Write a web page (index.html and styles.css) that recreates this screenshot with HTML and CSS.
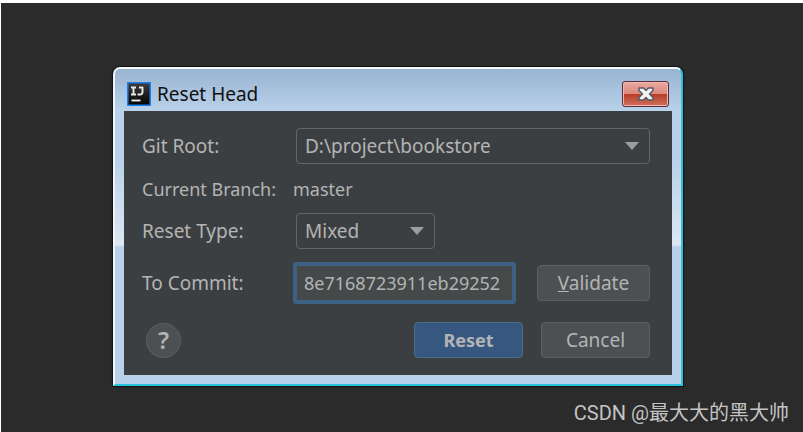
FILE: index.html
```html
<!DOCTYPE html>
<html lang="en">
<head>
  <meta charset="UTF-8">
  <meta name="viewport" content="width=device-width, initial-scale=1.0">
  <title>Reset Head</title>
  <link rel="stylesheet" href="styles.css">
</head>
<body>
  <main class="desktop">
    <form class="dialog" aria-labelledby="dialog-title">
      <div class="title-bar">
        <svg class="app-icon" width="24" height="24" viewBox="0 0 24 24" aria-hidden="true">
          <defs>
            <linearGradient id="icon-fill" x1="0" y1="0" x2="0" y2="1">
              <stop offset="0" stop-color="#3a3b3d"/>
              <stop offset="1" stop-color="#050505"/>
            </linearGradient>
          </defs>
          <rect width="24" height="24" fill="#1a7df0"/>
          <rect x="1.500" y="1.500" width="21" height="21" fill="url(#icon-fill)"/>
          <path d="M4 5.500h5M6.500 5.500v7M4 12.500h5M12 5.500h4M15.500 5v5q0 2.500-2.500 2.500h-2.500" fill="none" stroke="#e8e8e8" stroke-width="1.900"/>
          <path d="M4.500 18.500h9" stroke="#f2f2f2" stroke-width="1.800"/>
        </svg>
        <h1 id="dialog-title">Reset Head</h1>
        <button type="button" class="close-button" aria-label="Close">
          <svg width="18" height="14" viewBox="0 0 18 14" aria-hidden="true">
            <path d="M2 1h4.500l2.500 2.500L11.500 1H16v2.500L12.500 7l3.500 3.500V13h-4.500L9 10.500 6.500 13H2v-2.500L5.500 7 2 3.500z" fill="#f2f2f2" stroke="#565b6b" stroke-width="1.500" stroke-linejoin="round"/>
          </svg>
        </button>
      </div>

      <div class="content">
        <div class="row">
          <label for="git-root">Git Root:</label>
          <div class="select-box">
            <select id="git-root">
              <option>D:\project\bookstore</option>
            </select>
          </div>
        </div>

        <div class="row info-row">
          <span>Current Branch:</span>
          <span>master</span>
        </div>

        <div class="row">
          <label for="reset-type">Reset Type:</label>
          <div class="select-box short">
            <select id="reset-type">
              <option>Mixed</option>
              <option>Soft</option>
              <option>Hard</option>
            </select>
          </div>
        </div>

        <div class="row commit-row">
          <label for="commit">To Commit:</label>
          <input type="text" id="commit" value="8e7168723911eb29252">
          <button type="button" class="button validate"><u>V</u>alidate</button>
        </div>

        <div class="actions">
          <button type="button" class="help-button" aria-label="Help">?</button>
          <button type="submit" class="button primary">Reset</button>
          <button type="button" class="button">Cancel</button>
        </div>
      </div>
    </form>
    <p class="watermark">CSDN @最大大的黑大帅</p>
  </main>
</body>
</html>
```
FILE: styles.css
```css
* {
  box-sizing: border-box;
}
body {
  margin: 0;
  background: #fff;
  color: #b4b4b4;
  font: 19px/24px "Noto Sans", "Noto Sans CJK SC", sans-serif;
}
button, input, select {
  color: inherit;
  font: inherit;
}
.desktop {
  position: relative;
  min-height: calc(100vh - 3px);
  margin: 3px 0 0 1px;
  padding: 64px 120px 44px 112px;
  background: #2b2b2b;
}

/* window frame */
.dialog {
  padding: 0 9px 9px;
  border: 2px solid #29c4dc;
  border-top-color: #f4f8fb;
  border-left-color: #eef4fa;
  border-radius: 7px 7px 0 0;
  background: linear-gradient(#99b4d1, #b9d1ea 42px, #b9d1ea 90px, #dce7f3 176px, #b9d1ea 178px);
  box-shadow: 0 0 1px 1px #111;
}
.title-bar {
  display: flex;
  align-items: center;
  height: 42px;
  padding: 7px 3px 0;
  color: #111;
}
.title-bar h1 {
  flex: 1;
  margin: 0 0 0 6px;
  font-size: 19px;
  font-weight: 400;
}
.close-button {
  display: flex;
  align-items: center;
  justify-content: center;
  width: 47px;
  height: 26px;
  padding: 0;
  border: 1px solid #592b3d;
  border-radius: 3px;
  background: linear-gradient(#e9aaa0, #dc8a7d 48%, #b73c25 50%, #d0705c);
  box-shadow: inset 0 0 0 1px #eebbb2;
}

/* form */
.content {
  padding: 17px 22px 17px 18px;
  background: #3c3f41;
}
.row {
  display: grid;
  grid-template-columns: 151px 1fr;
  align-items: center;
  min-height: 36px;
  margin-bottom: 7px;
}
.info-row {
  min-height: 35px;
  font-size: 18px;
}
.select-box {
  position: relative;
  margin-left: 3px;
}
.select-box.short {
  width: 139px;
}
.select-box select {
  display: block;
  width: 100%;
  height: 36px;
  padding: 0 36px 0 8px;
  border: 1px solid #646566;
  border-radius: 4px;
  background: #3c3f41;
  appearance: none;
}
.select-box::after {
  content: "";
  position: absolute;
  top: 14px;
  right: 11px;
  width: 14px;
  height: 8px;
  background: #9b9ea0;
  clip-path: polygon(0 0, 100% 0, 50% 100%);
  pointer-events: none;
}
.commit-row {
  grid-template-columns: 151px 1fr 113px;
  margin: 13px 0 18px;
}
.commit-row input {
  width: 223px;
  height: 42px;
  padding: 0 7px;
  border: 4px solid #3d6185;
  border-radius: 3px;
  outline: none;
  background: #45494a;
  font-size: 18px;
}
.button {
  width: 109px;
  height: 36px;
  padding: 0;
  border: 1px solid #5e6060;
  border-radius: 4px;
  background: #4c5052;
}
.button.validate {
  width: 113px;
}
.button.primary {
  border-color: #4c708c;
  background: #365880;
  font-size: 18px;
  font-weight: 700;
}
.actions {
  display: flex;
  align-items: center;
  gap: 18px;
}
.help-button {
  width: 35px;
  height: 35px;
  margin: 0 auto 0 4px;
  padding: 0;
  border: 1px solid #5e6060;
  border-radius: 50%;
  background: #4c5052;
  font-size: 24px;
  font-weight: 600;
}
.watermark {
  position: absolute;
  right: 14px;
  bottom: 7px;
  margin: 0;
  color: #c4c4c4;
  font: 20px/24px Roboto, "Noto Sans CJK SC", sans-serif;
}
```
